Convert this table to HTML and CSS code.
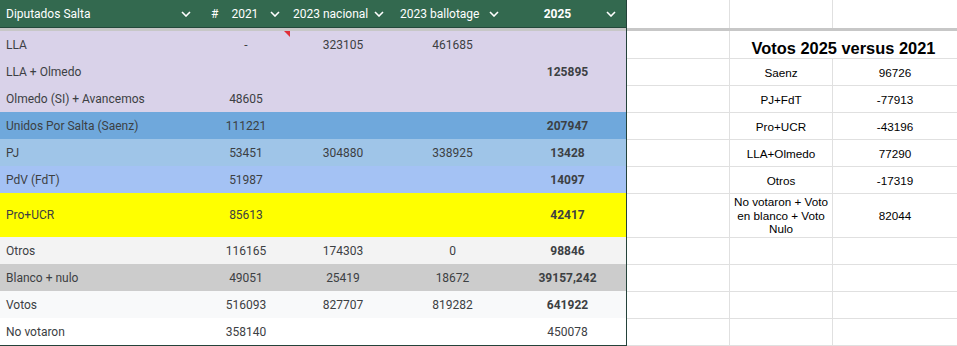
FILE: index.html
```html
<!DOCTYPE html>
<html lang="es">
<head>
<meta charset="utf-8">
<title>Diputados Salta</title>
<link rel="stylesheet" href="styles.css">
</head>
<body>
<div class="sheet">
  <div class="table">
    <div class="thead">
      <div class="th c-a"><span class="lbl">Diputados Salta</span><svg class="chev" viewBox="0 0 10 6"><path d="M1 1L5 5L9 1"/></svg></div>
      <div class="th c-b"><span class="hash">#</span><span class="lbl">2021</span><svg class="chev" viewBox="0 0 10 6"><path d="M1 1L5 5L9 1"/></svg></div>
      <div class="th c-c"><span class="lbl">2023 nacional</span><svg class="chev" viewBox="0 0 10 6"><path d="M1 1L5 5L9 1"/></svg></div>
      <div class="th c-d"><span class="lbl">2023 ballotage</span><svg class="chev" viewBox="0 0 10 6"><path d="M1 1L5 5L9 1"/></svg></div>
      <div class="th c-e"><span class="lbl center bold">2025</span><svg class="chev" viewBox="0 0 10 6"><path d="M1 1L5 5L9 1"/></svg></div>
    </div>
    <div class="freeze"></div>
    <div class="tr lav"><div class="td name">LLA</div><div class="td num note">-</div><div class="td num">323105</div><div class="td num">461685</div><div class="td num b"></div></div>
    <div class="tr lav"><div class="td name">LLA + Olmedo</div><div class="td num"></div><div class="td num"></div><div class="td num"></div><div class="td num b">125895</div></div>
    <div class="tr lav"><div class="td name">Olmedo (SI) + Avancemos</div><div class="td num">48605</div><div class="td num"></div><div class="td num"></div><div class="td num b"></div></div>
    <div class="tr blue1"><div class="td name">Unidos Por Salta (Saenz)</div><div class="td num">111221</div><div class="td num"></div><div class="td num"></div><div class="td num b">207947</div></div>
    <div class="tr blue2"><div class="td name">PJ</div><div class="td num">53451</div><div class="td num">304880</div><div class="td num">338925</div><div class="td num b">13428</div></div>
    <div class="tr blue3"><div class="td name">PdV (FdT)</div><div class="td num">51987</div><div class="td num"></div><div class="td num"></div><div class="td num b">14097</div></div>
    <div class="tr yellow tall"><div class="td name">Pro+UCR</div><div class="td num">85613</div><div class="td num"></div><div class="td num"></div><div class="td num b">42417</div></div>
    <div class="tr gray1"><div class="td name">Otros</div><div class="td num">116165</div><div class="td num">174303</div><div class="td num">0</div><div class="td num b">98846</div></div>
    <div class="tr gray2"><div class="td name">Blanco + nulo</div><div class="td num">49051</div><div class="td num">25419</div><div class="td num">18672</div><div class="td num b">39157,242</div></div>
    <div class="tr gray3"><div class="td name">Votos</div><div class="td num">516093</div><div class="td num">827707</div><div class="td num">819282</div><div class="td num b">641922</div></div>
    <div class="tr white"><div class="td name">No votaron</div><div class="td num">358140</div><div class="td num"></div><div class="td num"></div><div class="td num">450078</div></div>
  </div>
  <div class="side">
    <div class="side-top"><div class="sc"></div><div class="sc"></div><div class="sc last"></div></div>
    <div class="freeze"></div>
    <div class="side-body">
      <div class="sc first"></div><div class="sc first title">Votos 2025 versus 2021</div>
      <div class="sc"></div><div class="sc">Saenz</div><div class="sc last">96726</div>
      <div class="sc"></div><div class="sc">PJ+FdT</div><div class="sc last">-77913</div>
      <div class="sc"></div><div class="sc">Pro+UCR</div><div class="sc last">-43196</div>
      <div class="sc"></div><div class="sc">LLA+Olmedo</div><div class="sc last">77290</div>
      <div class="sc"></div><div class="sc">Otros</div><div class="sc last">-17319</div>
      <div class="sc"></div><div class="sc wrap">No votaron + Voto en blanco + Voto Nulo</div><div class="sc last">82044</div>
      <div class="sc"></div><div class="sc"></div><div class="sc last"></div>
      <div class="sc"></div><div class="sc"></div><div class="sc last"></div>
      <div class="sc"></div><div class="sc"></div><div class="sc last"></div>
      <div class="sc end"></div><div class="sc end"></div><div class="sc last end"></div>
    </div>
  </div>
</div>
</body>
</html>
```
FILE: styles.css
```css
* { box-sizing: border-box; }
html, body { margin: 0; padding: 0; background: #ffffff; }
body { width: 957px; height: 346px; overflow: hidden; }

.sheet { display: flex; width: 957px; height: 346px; }

.table {
  width: 627px;
  flex: none;
  border-right: 1px solid #24423a;
  border-bottom: 1px solid #24423a;
  font-family: Roboto, "Liberation Sans", sans-serif;
  font-size: 12px;
  color: #3c4043;
}

.thead, .tr {
  display: grid;
  grid-template-columns: 202px 88px 106px 113px 117px;
}

.thead {
  height: 28px;
  background: #33694f;
  border-bottom: 1px solid #23483a;
  color: #ffffff;
}

.th {
  display: flex;
  align-items: center;
  padding-right: 10px;
  white-space: nowrap;
}
.th .lbl { flex: 1; }
.th .center { text-align: center; }
.th .bold { font-weight: 700; }
.th .hash { margin-right: 13px; }

.c-a { padding-left: 6px; padding-right: 11px; }
.c-b { padding-left: 9px; }
.c-c { padding-left: 3px; padding-right: 12px; }
.c-d { padding-left: 4px; }
.c-e { padding-left: 0; }

.chev {
  width: 10px;
  height: 6px;
  flex: none;
  fill: none;
  stroke: #ffffff;
  stroke-width: 1.6;
}

.freeze { height: 3px; background: #c7c7c7; }

.tr { height: 27px; }
.tr.tall { height: 44px; }
.lav { background: #d9d2e9; }
.blue1 { background: #6fa8dc; }
.blue2 { background: #9fc5e8; }
.blue3 { background: #a4c2f4; }
.yellow { background: #ffff00; }
.gray1 { background: #f3f3f3; }
.gray2 { background: #cccccc; }
.gray3 { background: #f8f9fa; }
.white { background: #ffffff; }

.td {
  display: flex;
  align-items: center;
  white-space: nowrap;
}
.td.name { padding-left: 6px; }
.td.num { justify-content: center; }
.td.b { font-weight: 700; }
.td.note { position: relative; }
.td.note::after {
  content: "";
  position: absolute;
  top: 0;
  right: 0;
  border-top: 6px solid #e0303a;
  border-left: 6px solid transparent;
}

.side {
  flex: 1;
  display: flex;
  flex-direction: column;
  font-family: "Liberation Sans", Arial, sans-serif;
  font-size: 11.7px;
  color: #000000;
}

.side-top, .side-body {
  display: grid;
  grid-template-columns: 103px 103px 1fr;
}
.side-top { height: 28px; }
.side-body { grid-template-rows: repeat(6, 27px) 44px repeat(3, 27px) 28px; }

.sc {
  border-right: 1px solid #e0e0e0;
  border-top: 1px solid #e0e0e0;
  display: flex;
  align-items: center;
  justify-content: center;
  text-align: center;
}
.side-top .sc { border-top: 0; }
.sc.first { border-top: 0; }
.sc.last { border-right: 0; }
.sc.end { border-bottom: 1px solid #e0e0e0; }

.title {
  grid-column: span 2;
  border-right: 0;
  align-items: flex-end;
  font-size: 16.4px;
  font-weight: 700;
  white-space: nowrap;
}
.wrap { line-height: 13.4px; padding: 0 1px; }
```
